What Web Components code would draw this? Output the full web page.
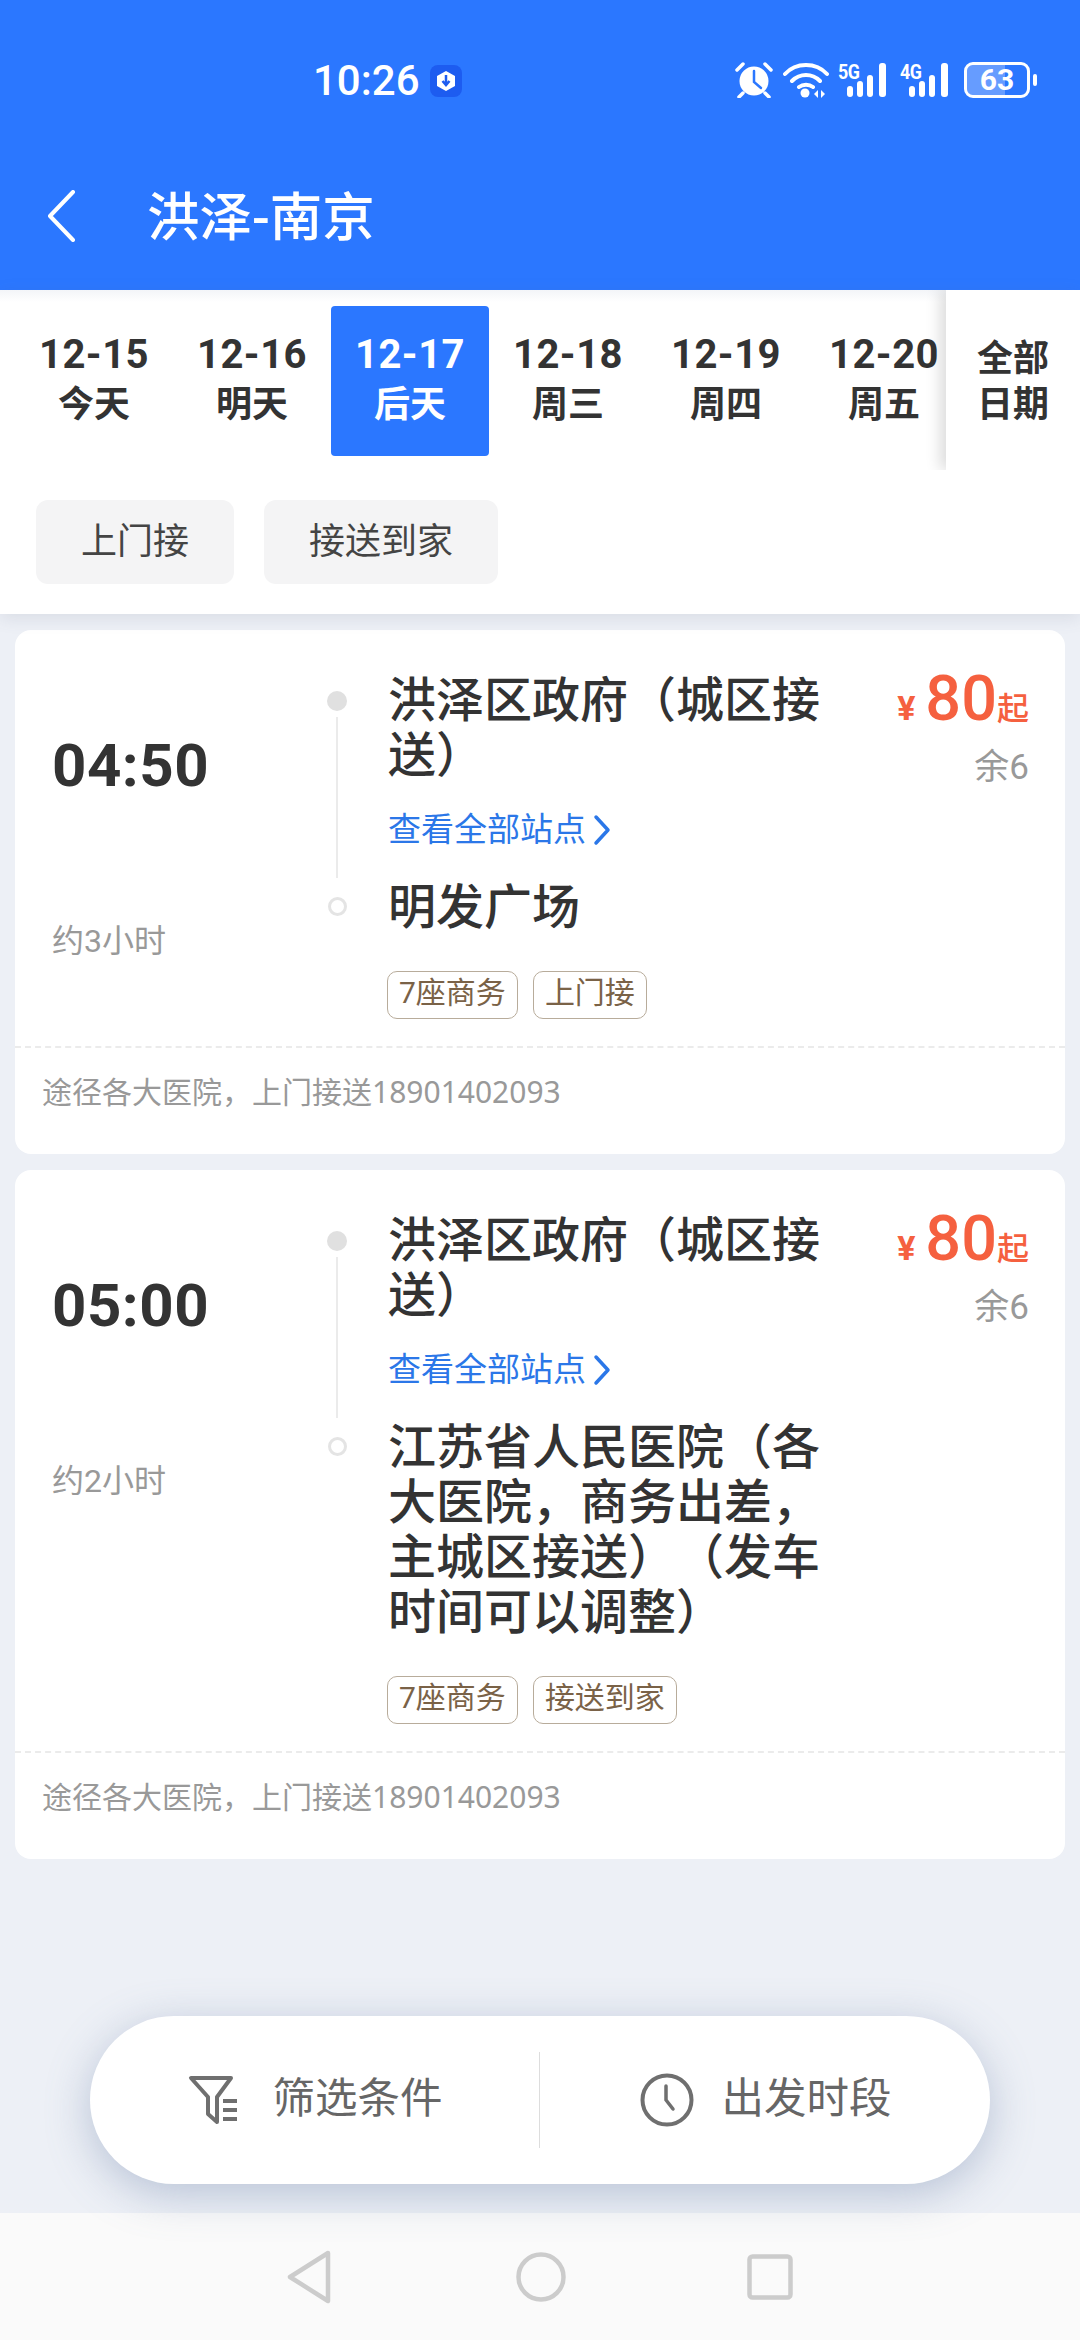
<!DOCTYPE html>
<html lang="zh-CN">
<head>
<meta charset="UTF-8" />
<title>洪泽-南京</title>
<style>
	html, body { margin: 0; padding: 0; }
	body {
		width: 1080px;
		height: 2340px;
		overflow: hidden;
		background: #edf0f6;
		font-family: Roboto, "Noto Sans CJK SC", sans-serif;
		text-spacing-trim: space-all;
		display: flex;
		flex-direction: column;
		position: relative;
	}
</style>
</head>
<body>
<app-header title-text="洪泽-南京" time="10:26" battery="63"></app-header>

<filter-panel>
	<date-cell slot="dates" date="12-15" day="今天"></date-cell>
	<date-cell slot="dates" date="12-16" day="明天"></date-cell>
	<date-cell slot="dates" date="12-17" day="后天" selected></date-cell>
	<date-cell slot="dates" date="12-18" day="周三"></date-cell>
	<date-cell slot="dates" date="12-19" day="周四"></date-cell>
	<date-cell slot="dates" date="12-20" day="周五"></date-cell>
	<filter-chip slot="chips">上门接</filter-chip>
	<filter-chip slot="chips">接送到家</filter-chip>
</filter-panel>

<trip-list>
	<trip-card time="04:50" duration="约3小时" price="80" left="余6"
		note="途径各大医院，上门接送18901402093">
		<span slot="from">洪泽区政府（城区接送）</span>
		<span slot="to">明发广场</span>
		<trip-tag slot="tags">7座商务</trip-tag>
		<trip-tag slot="tags">上门接</trip-tag>
	</trip-card>
	<trip-card time="05:00" duration="约2小时" price="80" left="余6"
		note="途径各大医院，上门接送18901402093">
		<span slot="from">洪泽区政府（城区接送）</span>
		<span slot="to">江苏省人民医院（各大医院，商务出差，主城区接送）（发车时间可以调整）</span>
		<trip-tag slot="tags">7座商务</trip-tag>
		<trip-tag slot="tags">接送到家</trip-tag>
	</trip-card>
</trip-list>

<action-pill></action-pill>
<nav-bar></nav-bar>

<script>
	function define(name, html) {
		customElements.define(
			name,
			class extends HTMLElement {
				constructor() {
					super();
					this.attachShadow({ mode: "open" });
				}
				connectedCallback() {
					const attr = (k) => this.getAttribute(k) || "";
					this.shadowRoot.innerHTML = html(attr);
				}
			}
		);
	}

	define("app-header", (a) => `
		<style>
			:host { display: block; height: 290px; background: #2b77ff; color: #fff; flex: none; }
			.status { height: 162px; box-sizing: border-box; padding-top: 58px; display: flex; align-items: flex-start; position: relative; }
			.time { margin-left: 313px; font-size: 42px; font-weight: 500; line-height: 46px; width: 107px; white-space: nowrap; }
			.notif { margin: 7px 0 0 10px; width: 32px; height: 32px; }
			.icons { position: absolute; left: 735px; top: 62px; display: flex; align-items: flex-start; height: 36px; }
			.net { position: relative; width: 52px; height: 36px; margin-left: 10px; }
			.net span { position: absolute; left: -1px; top: -2px; font-size: 21px; font-weight: 700; line-height: 24px; letter-spacing: -0.5px; transform: scaleX(0.85); transform-origin: left; }
			.net svg { position: absolute; left: 0; top: 0; }
			.battery { margin-left: 11px; width: 66px; height: 36px; box-sizing: border-box; border: 3px solid #fff; border-radius: 9px; position: relative; overflow: hidden; text-align: center; font-size: 30px; line-height: 30px; }
			.battery::before { content: ""; position: absolute; left: 0; top: 0; bottom: 0; width: 63%; background: rgba(255, 255, 255, 0.28); }
			.battery b { position: relative; font-weight: 700; }
			.nub { width: 4px; height: 12px; margin: 12px 0 0 3px; background: #fff; border-radius: 2px; }
			.bar { height: 128px; display: flex; align-items: flex-start; }
			.back { margin: 28px 0 0 46px; flex: none; }
			.title { margin-left: 71px; font-size: 52.500px; line-height: 112px; font-weight: 500; }
		</style>
		<div class="status">
			<span class="time">${a("time")}</span>
			<svg class="notif" viewBox="0 0 32 32">
				<rect x="0" y="0" width="32" height="32" rx="8" fill="#1d5cf0"/>
				<path d="M16 6l9 5v10l-9 5-9-5V11z" fill="#fff"/>
				<path d="M16 10v10M12.500 16l3.500 4 3.500-4" stroke="#1d5cf0" stroke-width="2.500" fill="none"/>
			</svg>
			<div class="icons">
				<svg width="38" height="36" viewBox="0 0 38 36">
					<circle cx="19" cy="19" r="14.500" fill="#fff"/>
					<path d="M19 9v11l7 6" stroke="#2b77ff" stroke-width="2.500" fill="none" stroke-linecap="round"/>
					<path d="M2 8L8 2M36 8L30 2M8 31l-4 4M30 31l4 4" stroke="#fff" stroke-width="3.500" stroke-linecap="round"/>
				</svg>
				<svg width="46" height="36" viewBox="0 0 46 36" style="margin-left:10px">
					<path d="M2 12C13 0 33 0 44 12M9 19c8-8 20-8 28 0M16 25c4-3 10-3 14 0" stroke="#fff" stroke-width="4" fill="none" stroke-linecap="round"/>
					<circle cx="22" cy="31" r="4.500" fill="#fff"/>
					<path d="M31 32l4-4v8zM38 28l4 4-4 4z" fill="#fff"/>
				</svg>
				<div class="net"><span>5G</span>
					<svg width="52" height="36" viewBox="0 0 52 36">
						<rect x="8" y="24" width="6" height="11" rx="3" fill="#fff"/>
						<rect x="18" y="19" width="6" height="16" rx="3" fill="#fff"/>
						<rect x="28" y="13" width="6" height="22" rx="3" fill="#fff"/>
						<rect x="40" y="1" width="7" height="34" rx="3" fill="#fff"/>
					</svg>
				</div>
				<div class="net"><span>4G</span>
					<svg width="52" height="36" viewBox="0 0 52 36">
						<rect x="8" y="24" width="6" height="11" rx="3" fill="#fff"/>
						<rect x="18" y="19" width="6" height="16" rx="3" fill="#fff"/>
						<rect x="28" y="13" width="6" height="22" rx="3" fill="#fff"/>
						<rect x="40" y="1" width="7" height="34" rx="3" fill="#fff"/>
					</svg>
				</div>
				<div class="battery"><b>${a("battery")}</b></div>
				<div class="nub"></div>
			</div>
		</div>
		<div class="bar">
			<svg class="back" width="30" height="52" viewBox="0 0 30 52">
				<path d="M27 2L4 26l23 24" stroke="#fff" stroke-width="4" fill="none" stroke-linecap="round" stroke-linejoin="round"/>
			</svg>
			<span class="title">${a("title-text")}</span>
		</div>
	`);

	define("filter-panel", () => `
		<style>
			:host { display: block; flex: none; height: 324px; background: #fff; box-shadow: 0 4px 16px rgba(90, 100, 130, 0.14); position: relative; z-index: 1; }
			.dates { height: 180px; box-sizing: border-box; padding: 16px 0 0 15px; display: flex; overflow: hidden; position: relative; background: linear-gradient(#f3f5f8, #fff 12px); }
			.all { position: absolute; right: 0; top: 0; width: 134px; height: 180px; box-sizing: border-box; padding-top: 46px; background: #fff; box-shadow: -6px 0 14px rgba(0, 0, 0, 0.14); text-align: center; font-size: 36px; line-height: 46px; font-weight: 700; color: #333; }
			.chips { display: flex; gap: 30px; padding: 30px 0 0 36px; }
		</style>
		<div class="dates">
			<slot name="dates"></slot>
			<div class="all">全部<br />日期</div>
		</div>
		<div class="chips"><slot name="chips"></slot></div>
	`);

	define("date-cell", (a) => `
		<style>
			:host { display: block; flex: none; width: 158px; height: 150px; box-sizing: border-box; padding-top: 23px; text-align: center; color: #333; font-size: 36px; font-weight: 700; line-height: 51px; border-radius: 4px; }
			:host([selected]) { background: #2b77ff; color: #fff; }
			.d { font-size: 40px; font-weight: 700; letter-spacing: 0.5px; display: block; }
		</style>
		<span class="d">${a("date")}</span><span>${a("day")}</span>
	`);

	define("filter-chip", () => `
		<style>
			:host { display: block; height: 84px; box-sizing: border-box; padding: 0 45px; background: #f4f4f5; border-radius: 12px; color: #444; font-size: 36px; line-height: 84px; }
		</style>
		<slot></slot>
	`);

	define("trip-list", () => `
		<style>
			:host { display: flex; flex-direction: column; gap: 16px; padding: 16px 15px 0; flex: 1; }
		</style>
		<slot></slot>
	`);

	define("trip-card", (a) => `
		<style>
			:host { display: block; background: #fff; border-radius: 16px; color: #333; }
			.main { display: flex; padding: 43px 36px 0 37px; }
			.when { width: 275px; flex: none; }
			.time { font-size: 60px; font-weight: 700; line-height: 70px; margin-top: 58px; letter-spacing: 0.5px; }
			.dur { font-size: 32px; line-height: 40px; color: #999; margin-top: 120px; }
			.route { width: 510px; flex: none; }
			.leg { display: flex; }
			.mark { width: 52px; flex: none; display: flex; flex-direction: column; align-items: center; margin-left: -16px; margin-right: 28px; }
			.dot { width: 20px; height: 20px; border-radius: 50%; background: #e0e0e0; margin-top: 18px; flex: none; }
			.line { width: 2px; flex: 1; background: #ebebeb; margin: 6px 0 2px; }
			.ring { width: 19px; height: 19px; box-sizing: border-box; border-radius: 50%; border: 3px solid #e4e4e4; margin-top: 17px; flex: none; }
			.place { width: 436px; font-size: 48px; line-height: 55px; font-weight: 500; margin-left: -3px; }
			.link { color: #2b77e8; font-size: 33px; line-height: 40px; margin: 27px 0 30px -3px; display: flex; align-items: center; }
			.link svg { margin-left: 7px; }
			.tags { display: flex; gap: 15px; margin: 36px 0 0 60px; }
			.pay { flex: 1; text-align: right; color: #999; font-size: 35px; }
			.price { color: #f5603f; line-height: 62px; margin-top: -5px; white-space: nowrap; font-size: 32px; font-weight: 500; }
			.price i { font-style: normal; font-size: 34px; font-weight: 700; margin-right: 10px; }
			.price b { font-size: 63px; font-weight: 500; }
			.left { line-height: 40px; margin-top: 8px; }
			.note { margin-top: 27px; border-top: 2px dashed #ebebeb; padding: 24px 27px 0; height: 82px; font-family: "Noto Sans", "Noto Sans CJK SC", sans-serif; font-size: 30px; line-height: 40px; color: #999; }
		</style>
		<div class="main">
			<div class="when">
				<div class="time">${a("time")}</div>
				<div class="dur">${a("duration")}</div>
			</div>
			<div class="route">
				<div class="leg">
					<div class="mark"><span class="dot"></span><span class="line"></span></div>
					<div>
						<div class="place"><slot name="from"></slot></div>
						<div class="link">查看全部站点
							<svg width="18" height="32" viewBox="0 0 18 32"><path d="M3 3l12 13L3 29" stroke="#2b77e8" stroke-width="3.500" fill="none" stroke-linecap="round" stroke-linejoin="round"/></svg>
						</div>
					</div>
				</div>
				<div class="leg">
					<div class="mark"><span class="ring"></span></div>
					<div class="place"><slot name="to"></slot></div>
				</div>
				<div class="tags"><slot name="tags"></slot></div>
			</div>
			<div class="pay">
				<div class="price"><i>¥</i><b>${a("price")}</b>起</div>
				<div class="left">${a("left")}</div>
			</div>
		</div>
		<div class="note">${a("note")}</div>
	`);

	define("trip-tag", () => `
		<style>
			:host { display: block; height: 48px; box-sizing: border-box; padding: 0 11px; border: 1.500px solid #b8ac9b; border-radius: 10px; color: #7a6247; font-size: 30px; line-height: 42px; }
		</style>
		<slot></slot>
	`);

	define("action-pill", () => `
		<style>
			:host { display: flex; position: absolute; left: 90px; top: 2016px; width: 900px; height: 168px; background: #fff; border-radius: 84px; box-shadow: 0 10px 44px rgba(110, 130, 170, 0.42); color: #666; font-size: 42.500px; align-items: center; z-index: 2; }
			.side { width: 449px; height: 100%; display: flex; align-items: center; justify-content: center; box-sizing: border-box; gap: 32px; }
			.side span { position: relative; top: -6px; }
			.left { padding-left: 2px; }
			.right { padding-left: 3px; gap: 27px; }
			.div { width: 1px; height: 96px; background: #ddd; flex: none; }
		</style>
		<div class="side left">
			<svg width="52" height="52" viewBox="0 0 52 52">
				<path d="M3 4h40l-14 19v25l-9-8V23z" fill="none" stroke="#6f6f6f" stroke-width="4" stroke-linejoin="round"/>
				<path d="M35 27h14M35 36h14M35 45h14" stroke="#6f6f6f" stroke-width="4"/>
			</svg>
			<span>筛选条件</span>
		</div>
		<div class="div"></div>
		<div class="side right">
			<svg width="54" height="54" viewBox="0 0 54 54">
				<circle cx="27" cy="27" r="24.500" fill="none" stroke="#6f6f6f" stroke-width="4"/>
				<path d="M26 13v14l7 9" fill="none" stroke="#6f6f6f" stroke-width="3.500" stroke-linecap="round"/>
			</svg>
			<span>出发时段</span>
		</div>
	`);

	define("nav-bar", () => `
		<style>
			:host { display: flex; flex: none; height: 127px; background: #fafafa; align-items: center; justify-content: center; }
			svg { flex: none; }
		</style>
		<svg width="44" height="54" viewBox="0 0 44 54" style="margin-right:185px">
			<path d="M41 3L3 27l38 24z" fill="none" stroke="#ccc" stroke-width="4.500" stroke-linejoin="round"/>
		</svg>
		<svg width="50" height="50" viewBox="0 0 50 50" style="margin-right:181px">
			<circle cx="25" cy="25" r="22.500" fill="none" stroke="#ccc" stroke-width="4.500"/>
		</svg>
		<svg width="46" height="46" viewBox="0 0 46 46">
			<rect x="2.500" y="2.500" width="41" height="41" rx="3" fill="none" stroke="#ccc" stroke-width="4.500"/>
		</svg>
	`);
</script>
</body>
</html>
